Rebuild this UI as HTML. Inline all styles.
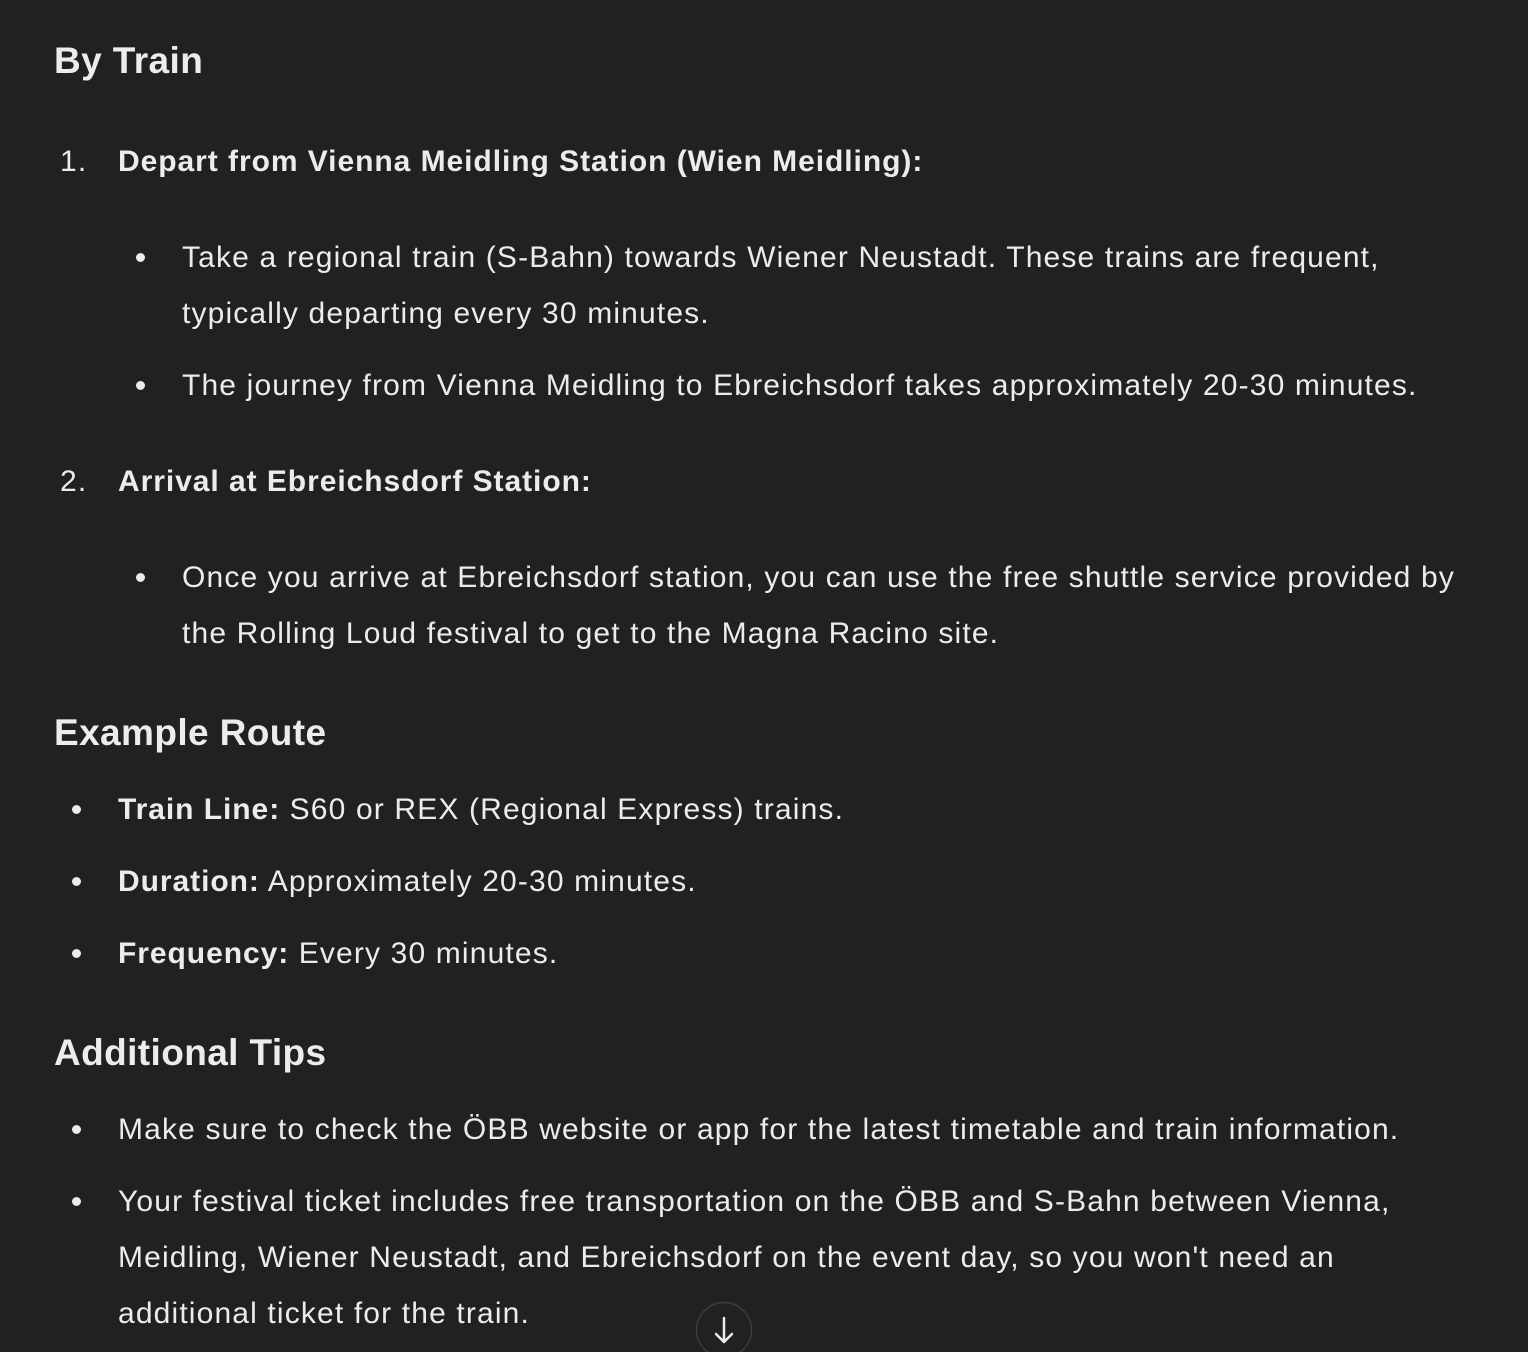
<!DOCTYPE html>
<html><head><meta charset="utf-8"><style>
html,body{margin:0;padding:0;background:#212121;overflow:hidden;width:1528px;height:1352px;}
body{position:relative;font-family:"Liberation Sans",sans-serif;color:#ececec;font-size:30px;letter-spacing:1.15px;}
.l{position:absolute;line-height:40px;white-space:nowrap;}
.h{font-size:37px;font-weight:bold;line-height:50px;letter-spacing:0.4px;}
b{font-weight:bold;letter-spacing:0.95px;}
.d{position:absolute;width:9px;height:9px;border-radius:50%;background:#ececec;}
</style></head><body>
<div class="l h" style="left:54px;top:36px">By Train</div>
<div class="l" style="left:60px;top:142px">1.</div>
<div class="l" style="left:118px;top:142px"><b>Depart from Vienna Meidling Station (Wien Meidling):</b></div>
<div class="d" style="left:136px;top:253px"></div>
<div class="l" style="left:182px;top:238px">Take a regional train (S-Bahn) towards Wiener Neustadt. These trains are frequent,</div>
<div class="l" style="left:182px;top:294px">typically departing every 30 minutes.</div>
<div class="d" style="left:136px;top:381px"></div>
<div class="l" style="left:182px;top:366px">The journey from Vienna Meidling to Ebreichsdorf takes approximately 20-30 minutes.</div>
<div class="l" style="left:60px;top:462px">2.</div>
<div class="l" style="left:118px;top:462px"><b>Arrival at Ebreichsdorf Station:</b></div>
<div class="d" style="left:136px;top:573px"></div>
<div class="l" style="left:182px;top:558px">Once you arrive at Ebreichsdorf station, you can use the free shuttle service provided by</div>
<div class="l" style="left:182px;top:614px">the Rolling Loud festival to get to the Magna Racino site.</div>
<div class="l h" style="left:54px;top:708px">Example Route</div>
<div class="d" style="left:72px;top:805px"></div>
<div class="l" style="left:118px;top:790px"><b>Train Line:</b> S60 or REX (Regional Express) trains.</div>
<div class="d" style="left:72px;top:877px"></div>
<div class="l" style="left:118px;top:862px"><b>Duration:</b> Approximately 20-30 minutes.</div>
<div class="d" style="left:72px;top:949px"></div>
<div class="l" style="left:118px;top:934px"><b>Frequency:</b> Every 30 minutes.</div>
<div class="l h" style="left:54px;top:1028px">Additional Tips</div>
<div class="d" style="left:72px;top:1125px"></div>
<div class="l" style="left:118px;top:1110px">Make sure to check the ÖBB website or app for the latest timetable and train information.</div>
<div class="d" style="left:72px;top:1197px"></div>
<div class="l" style="left:118px;top:1182px">Your festival ticket includes free transportation on the ÖBB and S-Bahn between Vienna,</div>
<div class="l" style="left:118px;top:1238px">Meidling, Wiener Neustadt, and Ebreichsdorf on the event day, so you won't need an</div>
<div class="l" style="left:118px;top:1294px">additional ticket for the train.</div>
<svg style="position:absolute;left:695px;top:1301px" width="58" height="58" viewBox="0 0 58 58">
<circle cx="29" cy="29" r="27.5" fill="#212121" stroke="#3d3d3d" stroke-width="1.5"/>
<path d="M29 17V41M21 33L29 41L37 33" fill="none" stroke="#ececec" stroke-width="2.5" stroke-linecap="round" stroke-linejoin="round"/>
</svg>
</body></html>
